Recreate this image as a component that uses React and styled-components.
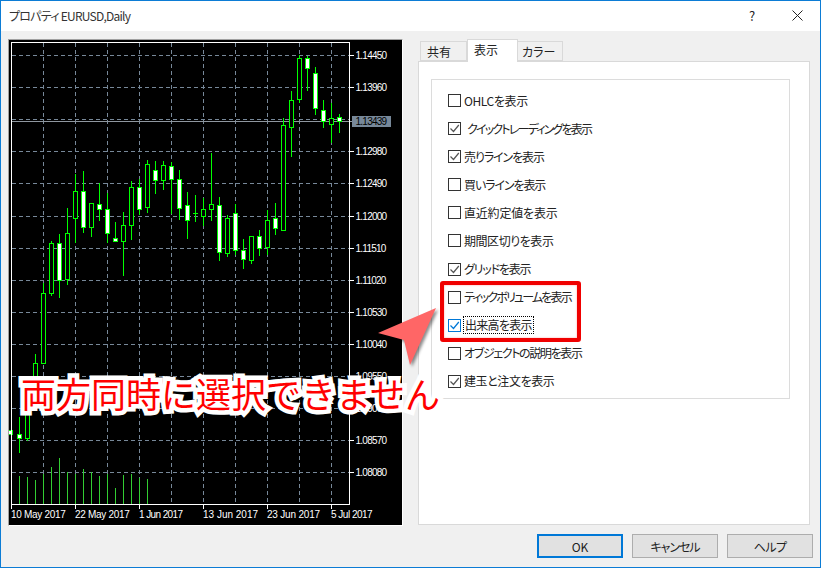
import React from "react";
import styled, { createGlobalStyle } from "styled-components";

const Global = createGlobalStyle`
  html, body { margin: 0; padding: 0; background: #f0f0f0; }
  body { width: 821px; height: 568px; overflow: hidden; }
  * { box-sizing: border-box; }
`;

const uiFont = `"Noto Sans CJK JP", "Noto Sans", sans-serif`;

const Window = styled.div`
  position: relative;
  width: 821px;
  height: 568px;
  display: flex;
  flex-direction: column;
  border: 1px solid #0c7cd5;
  background: #f0f0f0;
  font-family: ${uiFont};
  font-size: 12px;
  font-feature-settings: "palt";
  color: #222;
  overflow: hidden;
`;

const TitleBar = styled.header`
  height: 30px;
  flex: none;
  display: flex;
  align-items: center;
  background: #fff;
  padding: 0 0 2px 8px;
  color: #333;
`;
const Title = styled.span`
  flex: 1;
  letter-spacing: -0.75px;
`;
const TitleHelp = styled.span`
  width: 12px;
  text-align: center;
  font-size: 13px;
  color: #222;
  margin-right: 34px;
`;
const CloseIcon = styled.svg`
  width: 11px;
  height: 11px;
  margin-right: 17px;
`;

const Body = styled.div`
  flex: 1;
  display: flex;
  flex-direction: column;
  padding: 8px 7px 0 7px;
`;
const Main = styled.div`
  display: flex;
  align-items: flex-start;
`;

const ChartFrame = styled.div`
  width: 395px;
  height: 487px;
  flex: none;
  background: #000;
  border-style: solid;
  border-width: 1px;
  border-color: #a0a0a0 #fff #fff #a0a0a0;
`;
const ChartSvg = styled.svg`
  display: block;
  width: 393px;
  height: 485px;
  shape-rendering: crispEdges;
`;
const AxisText = styled.text`
  font-family: "Liberation Sans", sans-serif;
  font-size: 10px;
  font-feature-settings: normal;
  letter-spacing: ${(p) => p.$spacing};
  fill: ${(p) => p.$color};
`;

const Side = styled.section`
  width: 392px;
  margin-left: 15px;
  flex: none;
`;
const Tabs = styled.nav`
  height: 22px;
  display: flex;
  align-items: flex-end;
  padding-left: 2px;
  position: relative;
  z-index: 1;
`;
const Tab = styled.div`
  width: ${(p) => p.$width}px;
  height: ${(p) => (p.$active ? 23 : 20)}px;
  padding-left: ${(p) => p.$pad}px;
  margin-bottom: ${(p) => (p.$active ? -1 : 0)}px;
  line-height: ${(p) => (p.$active ? 20 : 19)}px;
  background: ${(p) => (p.$active ? "#fff" : "#f0f0f0")};
  border: 1px solid #d9d9d9;
  border-bottom: ${(p) => (p.$active ? "none" : "1px solid #d9d9d9")};
  border-left: ${(p) => (p.$first || p.$active ? "1px solid #d9d9d9" : "none")};
`;
const Panel = styled.div`
  height: 464px;
  background: #fff;
  border: 1px solid #d9d9d9;
  padding: 17px 0 0 12px;
`;
const Group = styled.div`
  width: 359px;
  height: 320px;
  border: 1px solid #dcdcdc;
  padding: 14px 0 0 16px;
  display: flex;
  flex-direction: column;
  gap: 15.1px;
`;
const Row = styled.div`
  height: 13px;
  display: flex;
  align-items: center;
  white-space: nowrap;
`;
const Box = styled.span`
  width: 13px;
  height: 13px;
  flex: none;
  display: block;
  background: #fff;
  border: 1px solid ${(p) => (p.$focus ? "#0078d7" : "#333")};
`;
const Check = styled.svg`
  display: block;
  width: 11px;
  height: 11px;
`;
const Label = styled.span`
  margin-left: ${(p) => p.$indent}px;
  line-height: 16px;
  height: 16px;
  padding: 0 ${(p) => (p.$focus ? 1 : 0)}px;
  outline: ${(p) => (p.$focus ? "1px dotted #000" : "none")};
  letter-spacing: ${(p) => p.$spacing}px;
`;

const Footer = styled.footer`
  display: flex;
  justify-content: flex-end;
  gap: 9px;
  margin-top: 8px;
`;
const Button = styled.button`
  width: 86px;
  height: 24px;
  padding: 0;
  font: inherit;
  font-feature-settings: "palt";
  letter-spacing: ${(p) => p.$spacing || 0}px;
  color: #222;
  background: #e1e1e1;
  border: ${(p) => (p.$primary ? "2px solid #0078d7" : "1px solid #adadad")};
`;

const RedBox = styled.div`
  position: absolute;
  left: 439px;
  top: 280px;
  width: 141px;
  height: 61px;
  border: 4px solid #f00000;
  border-radius: 3px;
  box-shadow: inset 0 0 2px #ff9a9a;
  pointer-events: none;
`;
const Arrow = styled.svg`
  position: absolute;
  left: 370px;
  top: 302px;
  width: 72px;
  height: 72px;
  filter: drop-shadow(2px 2px 1.5px rgba(0, 0, 0, 0.45));
`;
const Notice = styled.div`
  position: absolute;
  left: 20px;
  top: 367px;
  font-size: 35px;
  line-height: 50px;
  white-space: nowrap;
  color: #ff0000;
  font-feature-settings: normal;
  -webkit-text-stroke: 9px #fff;
  paint-order: stroke fill;
  stroke-linejoin: round;
`;

const hLines = [55, 87, 119, 151, 183, 216, 248, 280, 312, 344, 376, 408, 440, 472];
const vLines = [43, 75, 107, 139, 171, 203, 235, 267, 299, 331];
const prices = [
  [55, "1.14450"], [87, "1.13960"], [151, "1.12980"], [183, "1.12490"], [216, "1.12000"],
  [248, "1.11510"], [280, "1.11020"], [312, "1.10530"], [344, "1.10040"], [376, "1.09550"],
  [408, "1.09060"], [440, "1.08570"], [472, "1.08080"],
];
const dates = [
  [11, "10 May 2017", "-0.3px"], [75, "22 May 2017", "-0.3px"], [139, "1 Jun 2017", "-0.6px"],
  [203, "13 Jun 2017", "0"], [267, "23 Jun 2017", "-0.2px"], [331, "5 Jul 2017", "-0.5px"],
];
// x, wick top, wick bottom, body top, body bottom, filled
const candles = [
  [19, 417, 453, 434, 438, 1], [27, 400, 441, 400, 438, 0], [35, 354, 400, 363, 400, 0],
  [43, 283, 363, 293, 363, 0], [51, 241, 296, 243, 293, 0], [59, 234, 298, 243, 280, 1],
  [67, 208, 285, 233, 279, 0], [75, 174, 243, 191, 218, 0], [83, 171, 233, 191, 227, 1],
  [91, 203, 237, 203, 227, 0], [99, 183, 221, 204, 209, 1], [107, 193, 243, 209, 233, 1],
  [115, 222, 242, 238, 241, 1], [123, 212, 276, 225, 241, 0], [131, 181, 240, 187, 225, 0],
  [139, 179, 215, 187, 209, 1], [147, 160, 213, 164, 207, 0], [155, 161, 194, 170, 180, 1],
  [163, 161, 190, 165, 180, 0], [171, 162, 214, 166, 179, 1], [179, 170, 220, 179, 208, 1],
  [187, 192, 239, 205, 220, 1], [203, 198, 226, 209, 216, 0], [211, 153, 221, 204, 209, 0],
  [219, 197, 261, 205, 252, 1], [227, 215, 257, 218, 253, 0], [235, 204, 255, 213, 250, 1],
  [243, 239, 269, 250, 259, 1], [251, 236, 264, 236, 260, 0], [259, 230, 256, 236, 248, 1],
  [267, 210, 255, 220, 247, 0], [275, 203, 235, 218, 228, 1], [283, 118, 230, 125, 230, 0],
  [291, 91, 157, 100, 127, 0], [299, 55, 103, 58, 99, 0], [307, 56, 91, 58, 68, 1],
  [315, 67, 115, 73, 108, 1], [323, 100, 128, 110, 121, 1], [331, 103, 143, 118, 124, 0],
  [339, 114, 133, 117, 121, 1],
];
const volumes = [
  [19, 476], [27, 477], [35, 480], [43, 474], [51, 467], [59, 458], [67, 472], [75, 474], [83, 469],
  [91, 472], [99, 476], [107, 474], [115, 488], [123, 475], [131, 474], [139, 478], [147, 479],
];

const Chart = () => (
  <ChartSvg viewBox="9 40 393 485">
    {hLines.map((y) => (
      <line key={y} x1="12" x2="349" y1={y + 0.5} y2={y + 0.5} stroke="#778899" strokeDasharray="4 3" />
    ))}
    {vLines.map((x) => (
      <line key={x} x1={x + 0.5} x2={x + 0.5} y1="43" y2="504" stroke="#778899" strokeDasharray="4 3" />
    ))}
    <line x1="12" x2="352" y1="121.5" y2="121.5" stroke="#8f979f" />
    {volumes.map(([x, y]) => (
      <line key={x} x1={x + 0.5} x2={x + 0.5} y1={y} y2="504" stroke="#32cd32" />
    ))}
    <line x1="195.5" x2="195.5" y1="195" y2="222" stroke="#00ff00" />
    <line x1="193" x2="198" y1="213.5" y2="213.5" stroke="#00ff00" />
    <rect x="8" y="430.5" width="4.5" height="4" fill="#fff" stroke="#00ff00" />
    {candles.map(([x, top, bot, bt, bb, fill]) => (
      <g key={x}>
        <line x1={x + 0.5} x2={x + 0.5} y1={top} y2={bot} stroke="#00ff00" />
        <rect x={x - 1.5} y={bt + 0.5} width="4" height={bb - bt} fill={fill ? "#fff" : "#000"} stroke="#00ff00" />
      </g>
    ))}
    <rect x="11.5" y="42.5" width="338" height="462" fill="none" stroke="#fff" />
    {prices.map(([y]) => (
      <line key={y} x1="350" x2="354" y1={y + 0.5} y2={y + 0.5} stroke="#fff" />
    ))}
    {dates.map(([x]) => (
      <line key={x} x1={x + 0.5} x2={x + 0.5} y1="505" y2="509" stroke="#fff" />
    ))}
    {prices.map(([y, t]) => (
      <AxisText key={t} x="355.5" y={y + 4} $spacing="-0.75px" $color="#fff">{t}</AxisText>
    ))}
    <rect x="352" y="116" width="39" height="11" fill="#778899" />
    <AxisText x="355.5" y="125" $spacing="-0.75px" $color="#000">1.13439</AxisText>
    {dates.map(([x, t, s]) => (
      <AxisText key={t} x={x} y="518" $spacing={s} $color="#fff">{t}</AxisText>
    ))}
  </ChartSvg>
);

const options = [
  { label: "OHLCを表示", indent: 3, spacing: -0.4 },
  { label: "クイックトレーディングを表示", checked: true, indent: 6, spacing: -1.8 },
  { label: "売りラインを表示", checked: true, indent: 3, spacing: -1.1 },
  { label: "買いラインを表示", indent: 3, spacing: -1.1 },
  { label: "直近約定値を表示", indent: 3, spacing: -0.2 },
  { label: "期間区切りを表示", indent: 3, spacing: -0.45 },
  { label: "グリッドを表示", checked: true, indent: 3, spacing: -1.2 },
  { label: "ティックボリュームを表示", indent: 3, spacing: -1.85 },
  { label: "出来高を表示", checked: true, indent: 3, focus: true, spacing: -0.7 },
  { label: "オブジェクトの説明を表示", indent: 3, spacing: -1.35 },
  { label: "建玉と注文を表示", checked: true, indent: 3, spacing: -0.4 },
];

export default function App() {
  return (
    <>
      <Global />
      <Window>
        <TitleBar>
          <Title>プロパティ EURUSD,Daily</Title>
          <TitleHelp>?</TitleHelp>
          <CloseIcon viewBox="0 0 11 11">
            <path d="M0.5 0.5 L10.5 10.5 M10.5 0.5 L0.5 10.5" stroke="#222" strokeWidth="1" fill="none" />
          </CloseIcon>
        </TitleBar>
        <Body>
          <Main>
            <ChartFrame>
              <Chart />
            </ChartFrame>
            <Side>
              <Tabs>
                <Tab $width={47} $pad={6} $first>共有</Tab>
                <Tab $width={51} $pad={6} $active>表示</Tab>
                <Tab $width={45} $pad={4}>カラー</Tab>
              </Tabs>
              <Panel>
                <Group>
                  {options.map((o) => (
                    <Row key={o.label}>
                      <Box $focus={o.focus}>
                        {o.checked && (
                          <Check viewBox="0 0 11 11">
                            <path
                              d="M1.5 5.5 L4.5 8.5 L9.8 2"
                              fill="none"
                              stroke={o.focus ? "#0078d7" : "#555"}
                              strokeWidth="1.2"
                            />
                          </Check>
                        )}
                      </Box>
                      <Label $indent={o.indent} $focus={o.focus} $spacing={o.spacing}>{o.label}</Label>
                    </Row>
                  ))}
                </Group>
              </Panel>
            </Side>
          </Main>
          <Footer>
            <Button $primary>OK</Button>
            <Button $spacing={-1}>キャンセル</Button>
            <Button $spacing={-0.6}>ヘルプ</Button>
          </Footer>
        </Body>
        <RedBox />
        <Arrow viewBox="0 0 72 72">
          <polygon points="65,5 7,30 33,37 39,62" fill="#ff6666" />
        </Arrow>
        <Notice>両方同時に選択できません</Notice>
      </Window>
    </>
  );
}
